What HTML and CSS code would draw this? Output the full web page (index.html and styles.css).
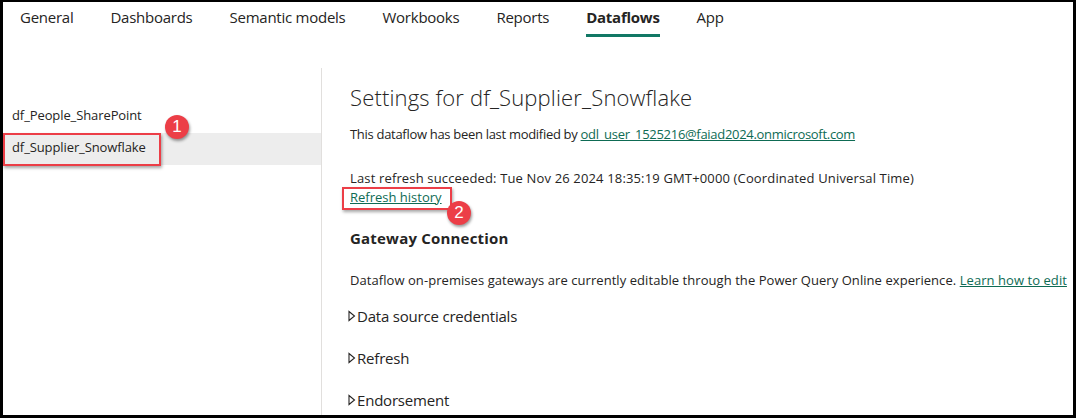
FILE: index.html
```html
<!DOCTYPE html>
<html>
<head>
<meta charset="utf-8">
<link rel="stylesheet" href="styles.css">
</head>
<body>
<div class="frame">
  <nav class="tabs">
    <span class="tab">General</span>
    <span class="tab">Dashboards</span>
    <span class="tab">Semantic models</span>
    <span class="tab">Workbooks</span>
    <span class="tab">Reports</span>
    <span class="tab active">Dataflows</span>
    <span class="tab">App</span>
  </nav>
  <div class="content">
    <aside class="sidebar">
      <div class="item">df_People_SharePoint</div>
      <div class="item selected">df_Supplier_Snowflake
        <span class="callout callout-1"></span>
        <span class="badge badge-1">1</span>
      </div>
    </aside>
    <main class="main">
      <h1 class="title">Settings for df_Supplier_Snowflake</h1>
      <p class="line modified">This dataflow has been last modified by <a class="link">odl_user_1525216@faiad2024.onmicrosoft.com</a></p>
      <p class="line refresh">Last refresh succeeded: Tue Nov 26 2024 18:35:19 GMT+0000 (Coordinated Universal Time)</p>
      <div class="history-wrap">
        <a class="link history">Refresh history</a>
        <span class="callout callout-2"></span>
        <span class="badge badge-2">2</span>
      </div>
      <h2 class="section">Gateway Connection</h2>
      <p class="line gateway">Dataflow on-premises gateways are currently editable through the Power Query Online experience. <a class="link">Learn how to edit</a></p>
      <div class="expander"><svg class="tri" width="8" height="12" viewBox="0 0 8 12"><path d="M1 1.5 L6.5 6 L1 10.5 Z" fill="none" stroke="#252423" stroke-width="1.1"/></svg>Data source credentials</div>
      <div class="expander"><svg class="tri" width="8" height="12" viewBox="0 0 8 12"><path d="M1 1.5 L6.5 6 L1 10.5 Z" fill="none" stroke="#252423" stroke-width="1.1"/></svg>Refresh</div>
      <div class="expander"><svg class="tri" width="8" height="12" viewBox="0 0 8 12"><path d="M1 1.5 L6.5 6 L1 10.5 Z" fill="none" stroke="#252423" stroke-width="1.1"/></svg>Endorsement</div>
    </main>
  </div>
</div>
</body>
</html>
```

FILE: styles.css
```css
html, body {
  margin: 0;
  padding: 0;
  background: #fff;
}
body {
  font-family: "Open Sans", "Noto Sans", sans-serif;
  color: #252423;
}
.frame {
  width: 1076px;
  height: 418px;
  box-sizing: border-box;
  border-style: solid;
  border-color: #000;
  border-width: 2px 3px 3px 3px;
  overflow: hidden;
  display: flex;
  flex-direction: column;
}
.tabs {
  display: flex;
  gap: 37px;
  padding: 5px 0 0 17px;
  height: 60px;
  box-sizing: border-box;
  flex: none;
}
.tab {
  font-size: 15px;
  line-height: 20px;
  height: 30px;
  box-sizing: border-box;
  letter-spacing: -0.25px;
}
.tab.active {
  font-weight: 700;
  border-bottom: 3px solid #117865;
}
.content {
  display: flex;
  flex: 1;
  margin-top: 6px;
}
.sidebar {
  width: 318px;
  flex: none;
  border-right: 1px solid #e1dfdd;
  padding-top: 33px;
  box-sizing: content-box;
}
.item {
  position: relative;
  height: 32px;
  line-height: 28px;
  padding-left: 9px;
  font-size: 13px;
  letter-spacing: -0.1px;
}
.item.selected {
  background: #ededed;
}
.callout {
  position: absolute;
  border: 2px solid #ec3e47;
  box-shadow: 1px 2px 3px rgba(0,0,0,0.35);
  box-sizing: border-box;
}
.callout-1 {
  left: 0;
  top: 0;
  width: 158px;
  height: 33px;
}
.badge {
  position: absolute;
  width: 24px;
  height: 24px;
  border-radius: 50%;
  background: #ec3e47;
  color: #fff;
  font-family: "Liberation Sans", Arial, sans-serif;
  font-size: 17px;
  line-height: 24px;
  text-align: center;
  box-shadow: 1px 2px 3px rgba(0,0,0,0.4);
}
.badge-1 {
  left: 162px;
  top: -18px;
}
.main {
  flex: 1;
  padding-left: 28px;
  min-width: 0;
}
.title {
  margin: 14px 0 0 0;
  font-size: 22px;
  line-height: 30px;
  font-weight: 300;
  letter-spacing: 0.15px;
}
.line {
  margin: 0;
  font-size: 13px;
  line-height: 18px;
  letter-spacing: 0;
  white-space: nowrap;
}
.modified {
  margin-top: 13px;
  letter-spacing: -0.3px;
}
.refresh {
  margin-top: 26px;
  letter-spacing: 0.15px;
}
.link {
  color: #0e6b54;
  text-decoration: underline;
}
.history-wrap {
  position: relative;
  font-size: 13px;
  line-height: 18px;
  letter-spacing: 0;
  height: 20px;
  margin-top: 1px;
}
.callout-2 {
  left: -8px;
  top: -1px;
  width: 110px;
  height: 23px;
}
.badge-2 {
  left: 97px;
  top: 13px;
}
.section {
  margin: 20px 0 0 0;
  font-size: 15px;
  line-height: 20px;
  font-weight: 700;
  letter-spacing: 0.2px;
}
.gateway {
  margin-top: 23px;
  letter-spacing: 0.06px;
}
.expander {
  display: flex;
  align-items: center;
  font-size: 15px;
  line-height: 20px;
  letter-spacing: -0.2px;
  margin-top: 22px;
  margin-left: -2px;
}
.gateway + .expander {
  margin-top: 17px;
}
.tri {
  margin-right: 1px;
}
```
